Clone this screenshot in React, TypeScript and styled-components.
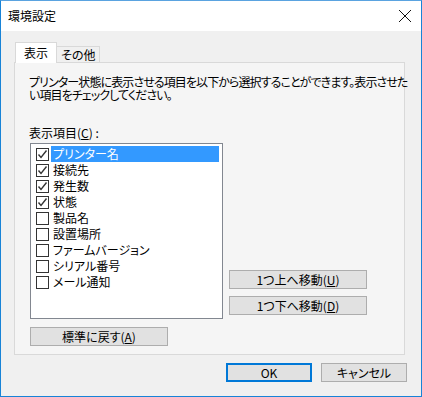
import React from 'react'
import styled, { createGlobalStyle } from 'styled-components'

const GlobalStyle = createGlobalStyle`
    body {
        margin: 0;
        background: #fff;
        font-family: "Noto Sans CJK JP", "Noto Sans", sans-serif;
        font-size: 12px;
        line-height: 14px;
        color: #000;
    }
    * {
        box-sizing: border-box;
    }
`

const Window = styled.div`
    width: 422px;
    height: 397px;
    border: 1px solid #1883d7;
    border-top-color: #5aa3e0;
    background: #f0f0f0;
    display: flex;
    flex-direction: column;
    font-feature-settings: "palt";
`

const TitleBar = styled.div`
    height: 30px;
    background: #fff;
    display: flex;
    align-items: center;
    justify-content: space-between;
    padding: 0 9px 0 7px;
    font-size: 12px;
`

const Content = styled.div`
    padding: 11px 16px 0 13px;
    display: flex;
    flex-direction: column;
`

const TabRow = styled.div`
    display: flex;
    align-items: flex-end;
    height: 21px;
    margin-bottom: -1px;
    position: relative;
    z-index: 1;
`

const Tab = styled.div<{ $active?: boolean }>`
    height: ${p => (p.$active ? '21px' : '17px')};
    padding: 0 ${p => (p.$active ? '8px' : '4px')};
    display: flex;
    align-items: center;
    background: ${p => (p.$active ? '#fff' : '#f0f0f0')};
    border: 1px solid #d9d9d9;
    border-bottom: ${p => (p.$active ? 'none' : '1px solid #d9d9d9')};
    margin-left: ${p => (p.$active ? '1px' : '-1px')};
    line-height: 1;
`

const Panel = styled.div`
    height: 293px;
    border: 1px solid #d9d9d9;
    background: #f5f5f5;
    padding: 12px 0 0 14px;
    display: flex;
    flex-direction: column;
`

const Desc = styled.p`
    margin: 0;
    line-height: 13px;
    letter-spacing: -0.9px;
    white-space: nowrap;
`

const Label = styled.div`
    margin-top: 25px;
    line-height: 14px;
`

const Body = styled.div`
    display: flex;
    align-items: flex-end;
    margin-top: 3px;
`

const List = styled.div`
    width: 193px;
    height: 176px;
    margin-left: 1px;
    background: #fff;
    border: 1px solid #828790;
    padding: 2px 3px 0 5px;
    display: flex;
    flex-direction: column;
`

const Row = styled.div`
    display: flex;
    align-items: center;
    height: 16px;
`

const Box = styled.span`
    width: 13px;
    height: 13px;
    border: 1px solid #333;
    background: #fff;
    display: flex;
    align-items: center;
    justify-content: center;
    flex-shrink: 0;
`

const ItemText = styled.span<{ $selected?: boolean }>`
    flex: 1;
    margin-left: 2px;
    height: 16px;
    line-height: 16px;
    padding-left: 2px;
    background: ${p => (p.$selected ? '#3399ff' : 'transparent')};
    color: ${p => (p.$selected ? '#fff' : '#000')};
`

const Side = styled.div`
    display: flex;
    flex-direction: column;
    gap: 7px;
    margin: 0 0 4px 6px;
`

const Button = styled.button<{ $default?: boolean; $w?: number }>`
    width: ${p => p.$w ?? 138}px;
    height: 19px;
    padding: 0;
    font-family: inherit;
    font-size: 12px;
    line-height: 1;
    color: #000;
    background: #e1e1e1;
    border: 1px solid ${p => (p.$default ? '#0078d7' : '#adadad')};
    box-shadow: ${p => (p.$default ? 'inset 0 0 0 1px #0078d7' : 'none')};
    font-feature-settings: "palt";
`

const ResetWrap = styled.div`
    margin-top: 8px;
    margin-left: 1px;
`

const Footer = styled.div`
    display: flex;
    justify-content: flex-end;
    gap: 9px;
    padding-top: 8px;
    margin-right: -2px;
`

const CloseIcon = () => (
    <svg width="14" height="14" viewBox="0 0 14 14">
        <path d="M1 1 L13 13 M13 1 L1 13" stroke="#111" strokeWidth="1" />
    </svg>
)

const Check = () => (
    <svg width="11" height="11" viewBox="0 0 11 11">
        <path d="M1.5 5.5 L4 8.5 L9.5 1.5" stroke="#333" strokeWidth="1.4" fill="none" />
    </svg>
)

const items = [
    { name: 'プリンター名', on: true },
    { name: '接続先', on: true },
    { name: '発生数', on: true },
    { name: '状態', on: true },
    { name: '製品名', on: false },
    { name: '設置場所', on: false },
    { name: 'ファームバージョン', on: false },
    { name: 'シリアル番号', on: false },
    { name: 'メール通知', on: false },
]

const App = () => {
    return (
        <Window>
            <GlobalStyle />
            <TitleBar>
                <span>環境設定</span>
                <CloseIcon />
            </TitleBar>
            <Content>
                <TabRow>
                    <Tab $active>表示</Tab>
                    <Tab>その他</Tab>
                </TabRow>
                <Panel>
                    <Desc>
                        プリンター状態に表示させる項目を以下から選択することができます。表示させた
                        <br />
                        い項目をチェックしてください。
                    </Desc>
                    <Label>表示項目(<u>C</u>) :</Label>
                    <Body>
                        <List>
                            {items.map((it, i) => (
                                <Row key={it.name}>
                                    <Box>{it.on && <Check />}</Box>
                                    <ItemText $selected={i === 0}>{it.name}</ItemText>
                                </Row>
                            ))}
                        </List>
                        <Side>
                            <Button>1つ上へ移動(<u>U</u>)</Button>
                            <Button>1つ下へ移動(<u>D</u>)</Button>
                        </Side>
                    </Body>
                    <ResetWrap>
                        <Button>標準に戻す(<u>A</u>)</Button>
                    </ResetWrap>
                </Panel>
                <Footer>
                    <Button $default $w={86}>OK</Button>
                    <Button $w={86}>キャンセル</Button>
                </Footer>
            </Content>
        </Window>
    )
}

export default App
